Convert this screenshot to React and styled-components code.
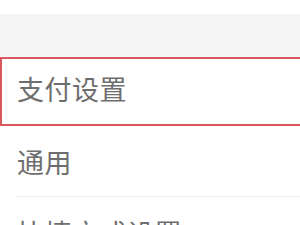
import React from 'react'
import styled, { createGlobalStyle } from 'styled-components'

const Global = createGlobalStyle`
  html, body {
    margin: 0;
    padding: 0;
    background: #ffffff;
    font-family: "Noto Sans CJK SC", "Noto Sans", sans-serif;
    overflow: hidden;
  }
`

const Page = styled.div`
  width: 300px;
  height: 225px;
  display: flex;
  flex-direction: column;
  overflow: hidden;
`

const TopBar = styled.div`
  height: 14px;
  flex: none;
  background: #ffffff;
`

const Spacer = styled.div`
  height: 43px;
  flex: none;
  background: #f5f5f5;
  border-bottom: 1px solid #fafafa;
  box-sizing: border-box;
`

const List = styled.div`
  display: flex;
  flex-direction: column;
`

const Row = styled.div`
  flex: none;
  box-sizing: border-box;
  height: ${p => (p.$active ? '69px' : '70px')};
  display: flex;
  align-items: center;
  padding-left: ${p => (p.$active ? '15px' : '17px')};
  margin-right: ${p => (p.$active ? '-4px' : '0')};
  border: ${p => (p.$active ? '2px solid #d9585e' : 'none')};
  box-shadow: ${p => (p.$active ? '0 2px 3px rgba(217, 88, 94, 0.15)' : 'none')};
  background: #ffffff;
`

const Divider = styled.div`
  height: 1px;
  margin-left: 15px;
  background: #ececec;
  flex: none;
`

const Label = styled.span`
  font-size: 27px;
  color: #6e6e6e;
  line-height: 1;
  letter-spacing: 0.5px;
  white-space: nowrap;
  margin-top: ${p => (p.$active ? '-6px' : '0')};
`

export default function App() {
  return (
    <Page>
      <Global />
      <TopBar />
      <Spacer />
      <List>
        <Row $active>
          <Label $active>支付设置</Label>
        </Row>
        <Row>
          <Label>通用</Label>
        </Row>
        <Divider />
        <Row>
          <Label>快捷方式设置</Label>
        </Row>
      </List>
    </Page>
  )
}
